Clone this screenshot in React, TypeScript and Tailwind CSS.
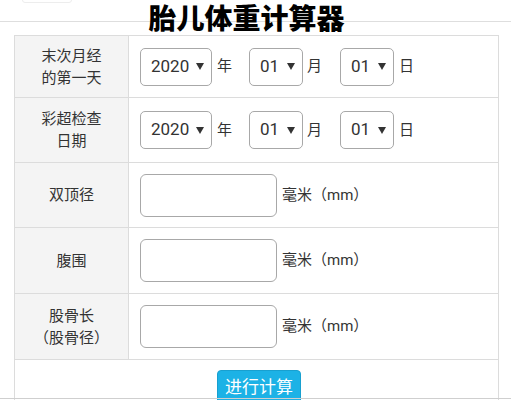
import React from "react";

const font = { fontFamily: 'Roboto, "Noto Sans CJK SC", sans-serif' };

function Arrow() {
  return (
    <svg width="8" height="7" viewBox="0 0 8 7" className="ml-auto">
      <path d="M0 0 L8 0 L4 7 Z" fill="#333" />
    </svg>
  );
}

function Sel({ value, w }: { value: string; w: string }) {
  return (
    <div className={`flex items-center h-[38px] ${w} border border-[#a8a8a8] rounded-[5px] pl-[10px] pr-[7px] text-[17px] text-[#333] bg-white`}>
      <span>{value}</span>
      <Arrow />
    </div>
  );
}

function DateRow() {
  return (
    <div className="flex items-center pl-[11px]">
      <Sel value="2020" w="w-[72px]" />
      <span className="ml-[5px] text-[15px] text-[#333]">年</span>
      <div className="ml-[17px]">
        <Sel value="01" w="w-[54px]" />
      </div>
      <span className="ml-[4px] text-[15px] text-[#333]">月</span>
      <div className="ml-[18px]">
        <Sel value="01" w="w-[54px]" />
      </div>
      <span className="ml-[5px] text-[15px] text-[#333]">日</span>
    </div>
  );
}

function InputRow() {
  return (
    <div className="flex items-center pl-[11px]">
      <div className="w-[137px] h-[43px] border border-[#a8a8a8] rounded-[6px] bg-white" />
      <span className="ml-[5px] text-[15px] text-[#333]">毫米（mm）</span>
    </div>
  );
}

function Row({ label, h, children }: { label: React.ReactNode; h: string; children: React.ReactNode }) {
  return (
    <div className={`grid grid-cols-[114px_1fr] ${h} border-b border-[#dcdcdc]`}>
      <div className="bg-[#f4f4f4] border-r border-[#dcdcdc] flex items-center justify-center text-center text-[15px] leading-[22px] text-[#333]">
        {label}
      </div>
      <div className="flex items-center">{children}</div>
    </div>
  );
}

export default function App() {
  return (
    <div className="w-[511px] h-[400px] bg-white overflow-hidden relative" style={font}>
      <div className="relative h-[35px]">
        <div className="absolute left-0 right-0 top-[21px] border-t border-[#dedede]" />
        <div className="absolute left-[22px] top-[-10px] w-[50px] h-[13px] border border-[#ededed] rounded-[3px]" />
        <div className="relative flex justify-center pr-[18px] pt-[4px]">
          <span className="text-[28px] leading-[32px] font-black text-black">胎儿体重计算器</span>
        </div>
      </div>
      <div className="ml-[14px] w-[485px] border-l border-r border-t border-[#dcdcdc]">
        <Row h="h-[62px]" label={<>末次月经<br />的第一天</>}>
          <DateRow />
        </Row>
        <Row h="h-[65px]" label={<>彩超检查<br />日期</>}>
          <DateRow />
        </Row>
        <Row h="h-[65px]" label="双顶径">
          <InputRow />
        </Row>
        <Row h="h-[66px]" label="腹围">
          <InputRow />
        </Row>
        <Row h="h-[66px]" label={<>股骨长<br />（股骨径）</>}>
          <InputRow />
        </Row>
        <div className="h-[60px] flex justify-center pt-[10px]">
          <div className="w-[84px] h-[36px] rounded-[4px] bg-[#1cb2e6] border border-[#18a0d0] text-white text-[17px] flex justify-center pt-[4px] ml-[5px]">
            进行计算
          </div>
        </div>
      </div>
      <div className="absolute left-0 right-0 top-[398px] border-t border-[#cfcfcf]" />
    </div>
  );
}
